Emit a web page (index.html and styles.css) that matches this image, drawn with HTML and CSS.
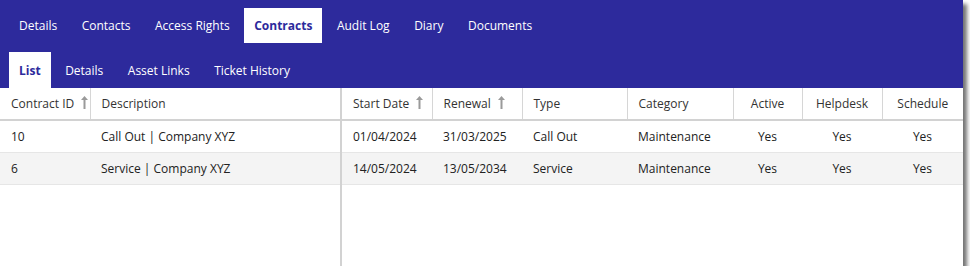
FILE: index.html
```html
<!DOCTYPE html>
<html lang="en">
  <head>
    <meta charset="UTF-8" />
    <title>Contracts</title>
    <link rel="stylesheet" href="styles.css">
  </head>
  <body>
    <div class="panel">
      <div class="tabs">
        <div class="tab-row main">
          <div class="tab">Details</div>
          <div class="tab">Contacts</div>
          <div class="tab">Access Rights</div>
          <div class="tab active">Contracts</div>
          <div class="tab">Audit Log</div>
          <div class="tab">Diary</div>
          <div class="tab">Documents</div>
        </div>
        <div class="tab-row sub">
          <div class="tab active">List</div>
          <div class="tab">Details</div>
          <div class="tab">Asset Links</div>
          <div class="tab">Ticket History</div>
        </div>
      </div>

      <div class="grid">
        <div class="pane frozen">
          <table>
            <colgroup>
              <col style="width: 90px" />
              <col />
            </colgroup>
            <thead>
              <tr>
                <th>Contract ID <span class="sort"></span></th>
                <th>Description</th>
              </tr>
            </thead>
            <tbody>
              <tr><td>10</td><td>Call Out | Company XYZ</td></tr>
              <tr class="alt"><td>6</td><td>Service | Company XYZ</td></tr>
            </tbody>
          </table>
        </div>

        <div class="pane scroll">
          <table>
            <colgroup>
              <col style="width: 90px" />
              <col style="width: 90px" />
              <col style="width: 105px" />
              <col style="width: 106px" />
              <col style="width: 69px" />
              <col style="width: 80px" />
              <col />
            </colgroup>
            <thead>
              <tr>
                <th>Start Date <span class="sort"></span></th>
                <th>Renewal <span class="sort"></span></th>
                <th>Type</th>
                <th>Category</th>
                <th class="center">Active</th>
                <th class="center">Helpdesk</th>
                <th class="center">Schedule</th>
              </tr>
            </thead>
            <tbody>
              <tr>
                <td>01/04/2024</td><td>31/03/2025</td><td>Call Out</td><td>Maintenance</td>
                <td class="center">Yes</td><td class="center">Yes</td><td class="center">Yes</td>
              </tr>
              <tr class="alt">
                <td>14/05/2024</td><td>13/05/2034</td><td>Service</td><td>Maintenance</td>
                <td class="center">Yes</td><td class="center">Yes</td><td class="center">Yes</td>
              </tr>
            </tbody>
          </table>
        </div>
      </div>
    </div>
  </body>
</html>
```

FILE: styles.css
```css
* {
  box-sizing: border-box;
}

body {
  margin: 0;
  font-family: "Open Sans", "Segoe UI", sans-serif;
  font-size: 12px;
  color: #222;
  background: #fff;
}

.panel {
  width: 963px;
  height: 266px;
  background: #fff;
  box-shadow: 4px 4px 4px rgba(0, 0, 0, 0.55);
  display: flex;
  flex-direction: column;
  overflow: hidden;
}

.tabs {
  background: #2d2a9c;
  padding: 8px 9px 0;
}

.tab-row {
  display: flex;
  gap: 4.5px;
}

.tab-row.main {
  height: 35px;
  margin-bottom: 9px;
}

.tab-row.sub {
  height: 36px;
}

.tab {
  padding: 0 10px;
  display: flex;
  align-items: center;
  color: #fff;
  font-size: 12px;
}

.tab.active {
  background: #fff;
  color: #2d2a9c;
  font-weight: bold;
}

.grid {
  flex: 1;
  display: flex;
}

.pane.frozen {
  width: 342px;
  border-right: 2px solid #d2d2d2;
}

.pane.scroll {
  flex: 1;
}

table {
  width: 100%;
  border-collapse: collapse;
  table-layout: fixed;
}

th {
  height: 32px;
  padding: 0 11px;
  font-weight: normal;
  text-align: left;
  white-space: nowrap;
  color: #333;
  border-bottom: 2px solid #d2d2d2;
  border-left: 1px solid #d6d6d6;
}

th:first-child {
  border-left: none;
}

td {
  height: 32px;
  padding: 0 11px;
  white-space: nowrap;
  border-bottom: 1px solid #e6e6e6;
}

tr.alt td {
  background: #f4f4f4;
}

.center {
  text-align: center;
}

.sort {
  display: inline-block;
  width: 7px;
  height: 13px;
  margin-left: 4px;
  vertical-align: -1px;
  background: url("data:image/svg+xml;utf8,<svg xmlns='http://www.w3.org/2000/svg' viewBox='0 0 7 13'><path d='M3.5 0 L7 4 L4.5 4 L4.5 13 L2.5 13 L2.5 4 L0 4 Z' fill='%239a9a9a'/></svg>") no-repeat;
}
```
